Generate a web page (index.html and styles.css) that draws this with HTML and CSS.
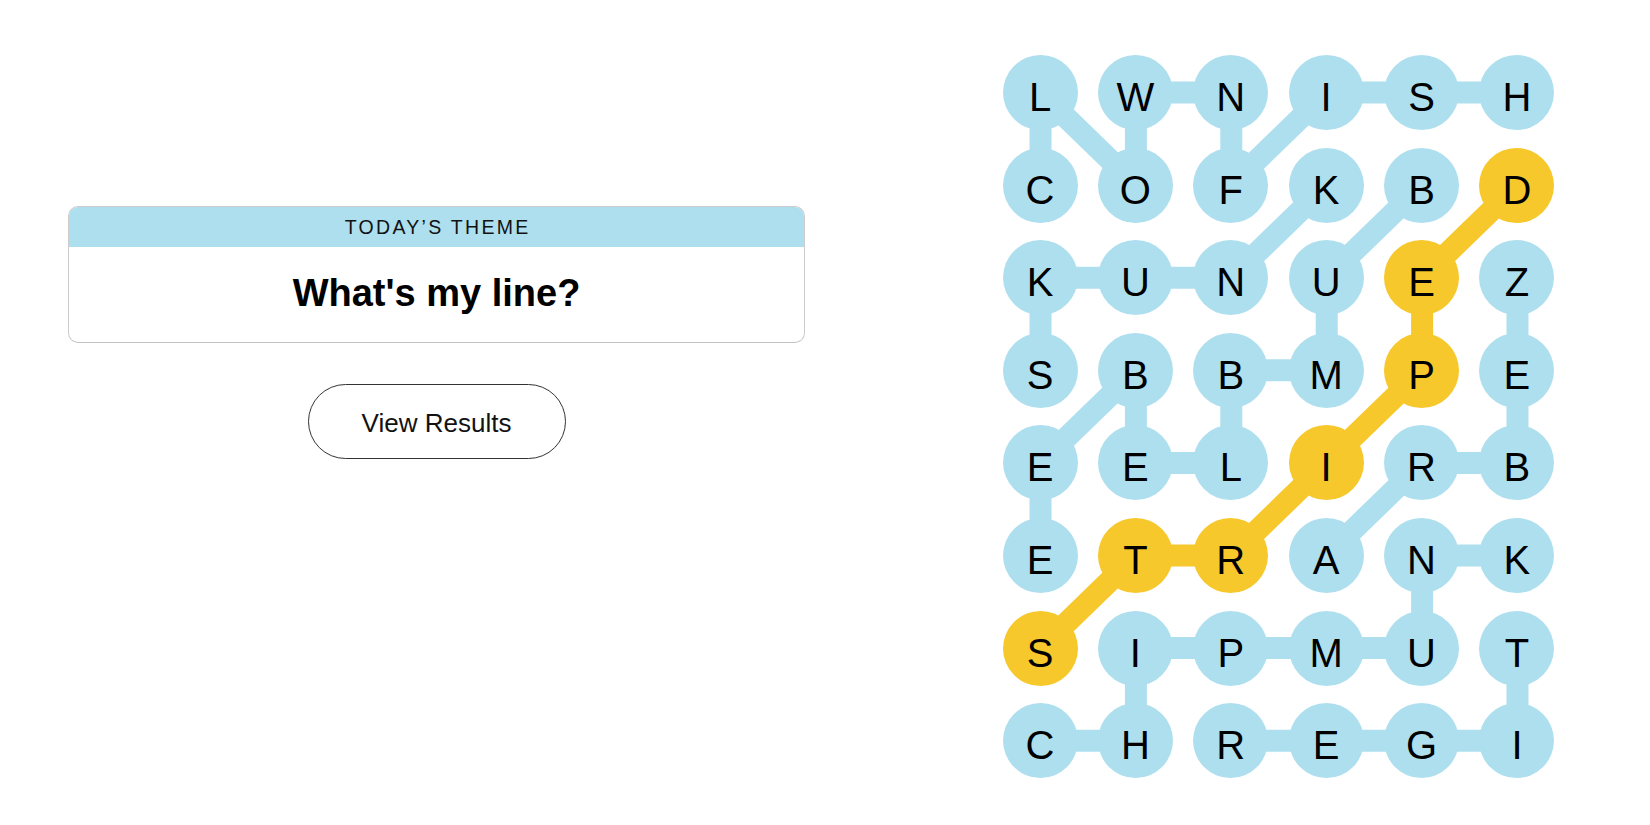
FILE: index.html
```html
<!DOCTYPE html>
<html lang="en">
<head>
<meta charset="utf-8">
<title>Strands</title>
<link rel="stylesheet" href="styles.css">
</head>
<body>
<main class="page">
  <section class="left">
    <div class="theme-card">
      <div class="theme-head">TODAY’S THEME</div>
      <div class="theme-body">What's my line?</div>
    </div>
    <button class="results-btn" type="button">View Results</button>
  </section>

  <section class="board">
    <svg class="links" viewBox="0 0 552 723.2" width="552" height="723.2" aria-hidden="true">
      <g fill="none" stroke-width="22" stroke-linejoin="round">
        <polyline class="l-blue" points="37.5,130.1 37.5,37.5 132.9,130.1 132.9,37.5 228.3,37.5 228.3,130.1 323.7,37.5 419.1,37.5 514.5,37.5"/>
        <polyline class="l-blue" points="37.5,315.3 37.5,222.7 132.9,222.7 228.3,222.7 323.7,130.1"/>
        <polyline class="l-blue" points="419.1,130.1 323.7,222.7 323.7,315.3 228.3,315.3 228.3,407.9 132.9,407.9 132.9,315.3 37.5,407.9 37.5,500.5"/>
        <polyline class="l-blue" points="514.5,222.7 514.5,315.3 514.5,407.9 419.1,407.9 323.7,500.5"/>
        <polyline class="l-blue" points="37.5,685.7 132.9,685.7 132.9,593.1 228.3,593.1 323.7,593.1 419.1,593.1 419.1,500.5 514.5,500.5"/>
        <polyline class="l-blue" points="514.5,593.1 514.5,685.7 419.1,685.7 323.7,685.7 228.3,685.7"/>
        <polyline class="l-gold" points="37.5,593.1 132.9,500.5 228.3,500.5 323.7,407.9 419.1,315.3 419.1,222.7 514.5,130.1"/>
      </g>
    </svg>
    <div class="grid">
      <div class="cell">L</div><div class="cell">W</div><div class="cell">N</div><div class="cell">I</div><div class="cell">S</div><div class="cell">H</div>
      <div class="cell">C</div><div class="cell">O</div><div class="cell">F</div><div class="cell">K</div><div class="cell">B</div><div class="cell gold">D</div>
      <div class="cell">K</div><div class="cell">U</div><div class="cell">N</div><div class="cell">U</div><div class="cell gold">E</div><div class="cell">Z</div>
      <div class="cell">S</div><div class="cell">B</div><div class="cell">B</div><div class="cell">M</div><div class="cell gold">P</div><div class="cell">E</div>
      <div class="cell">E</div><div class="cell">E</div><div class="cell">L</div><div class="cell gold">I</div><div class="cell">R</div><div class="cell">B</div>
      <div class="cell">E</div><div class="cell gold">T</div><div class="cell gold">R</div><div class="cell">A</div><div class="cell">N</div><div class="cell">K</div>
      <div class="cell gold">S</div><div class="cell">I</div><div class="cell">P</div><div class="cell">M</div><div class="cell">U</div><div class="cell">T</div>
      <div class="cell">C</div><div class="cell">H</div><div class="cell">R</div><div class="cell">E</div><div class="cell">G</div><div class="cell">I</div>
    </div>
  </section>
</main>
</body>
</html>
```

FILE: styles.css
```css
html, body {
  margin: 0;
  padding: 0;
  background: #ffffff;
}

body {
  font-family: "Liberation Sans", Arial, sans-serif;
  color: #121212;
}

.page {
  display: flex;
  align-items: flex-start;
  padding: 55px 0 0 68px;
  gap: 197.5px;
}

.left {
  width: 737px;
  padding-top: 151px;
  display: flex;
  flex-direction: column;
  align-items: center;
  gap: 41px;
}

.theme-card {
  width: 100%;
  box-sizing: border-box;
  height: 137px;
  border: 1px solid #cccccc;
  border-bottom-color: #c2c2c2;
  border-radius: 10px;
  overflow: hidden;
  display: flex;
  flex-direction: column;
}

.theme-head {
  height: 40px;
  background: #aedfee;
  display: flex;
  align-items: center;
  justify-content: center;
  font-size: 19.5px;
  letter-spacing: 2.3px;
  padding-left: 2.3px;
  padding-top: 1px;
  box-sizing: border-box;
  color: #121212;
}

.theme-body {
  flex: 1;
  display: flex;
  align-items: center;
  justify-content: center;
  font-size: 38px;
  font-weight: 700;
  color: #000;
  padding-bottom: 2px;
}

.results-btn {
  width: 258px;
  height: 75px;
  box-sizing: border-box;
  border: 1px solid #333333;
  border-radius: 40px;
  background: #ffffff;
  font-family: "Liberation Sans", Arial, sans-serif;
  font-size: 26px;
  color: #121212;
  cursor: pointer;
  padding: 4px 0 0;
}

.board {
  position: relative;
  width: 552px;
  height: 723.2px;
}

.links {
  position: absolute;
  left: 0;
  top: 0;
}

.l-blue { stroke: #aedfee; }
.l-gold { stroke: #f6c82b; }

.grid {
  position: relative;
  display: grid;
  grid-template-columns: repeat(6, 75px);
  grid-template-rows: repeat(8, 75px);
  column-gap: 20.4px;
  row-gap: 17.6px;
}

.cell {
  width: 75px;
  height: 75px;
  border-radius: 50%;
  background: #aedfee;
  display: flex;
  align-items: center;
  justify-content: center;
  box-sizing: border-box;
  padding-top: 9px;
  font-size: 40px;
  line-height: 1;
  color: #000;
}

.cell.gold {
  background: #f6c82b;
}
```
